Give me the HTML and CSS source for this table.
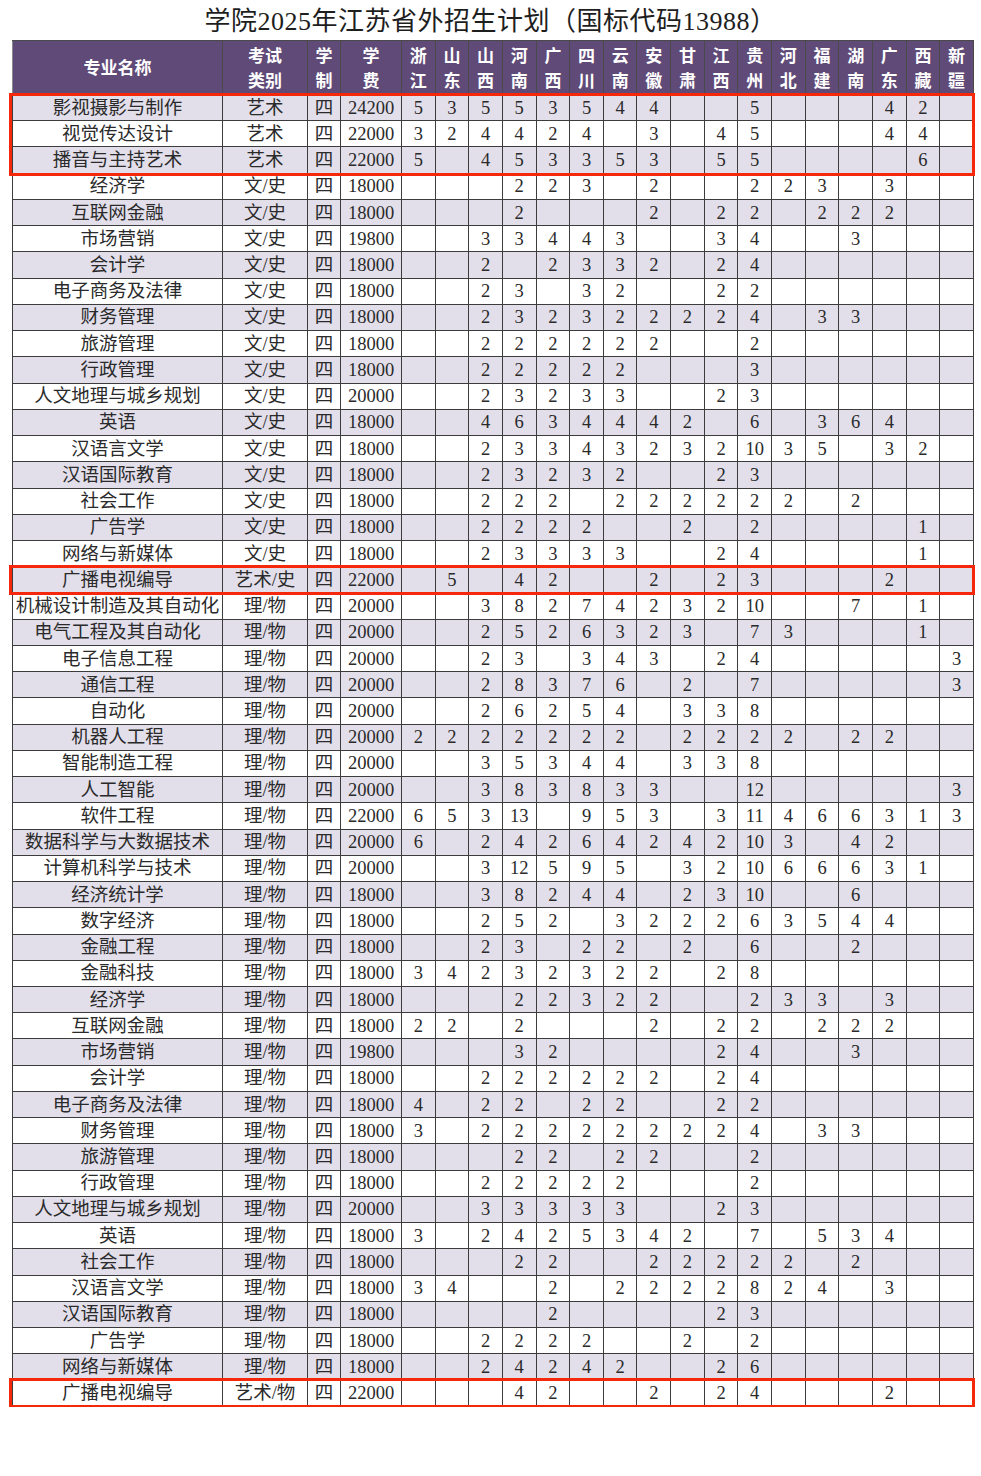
FILE: index.html
```html
<!DOCTYPE html>
<html lang="zh-CN">
<head>
<meta charset="utf-8">
<title>学院2025年江苏省外招生计划</title>
<link rel="stylesheet" href="styles.css">
</head>
<body>
<h1 class="title">学院2025年江苏省外招生计划（国标代码13988）</h1>
<div class="wrap">
<table class="plan">
<colgroup>
<col class="c-name"><col class="c-type"><col class="c-sys"><col class="c-fee">
<col class="c-p"><col class="c-p"><col class="c-p"><col class="c-p"><col class="c-p"><col class="c-p"><col class="c-p"><col class="c-p"><col class="c-p"><col class="c-p"><col class="c-p"><col class="c-p"><col class="c-p"><col class="c-p"><col class="c-p"><col class="c-p"><col class="c-p">
</colgroup>
<thead>
<tr>
<th>专业名称</th><th>考试<br>类别</th><th>学<br>制</th><th>学<br>费</th>
<th>浙<br>江</th><th>山<br>东</th><th>山<br>西</th><th>河<br>南</th><th>广<br>西</th><th>四<br>川</th><th>云<br>南</th><th>安<br>徽</th><th>甘<br>肃</th><th>江<br>西</th><th>贵<br>州</th><th>河<br>北</th><th>福<br>建</th><th>湖<br>南</th><th>广<br>东</th><th>西<br>藏</th><th>新<br>疆</th>
</tr>
</thead>
<tbody>
<tr><td class="mk mk3">影视摄影与制作</td><td>艺术</td><td>四</td><td>24200</td><td>5</td><td>3</td><td>5</td><td>5</td><td>3</td><td>5</td><td>4</td><td>4</td><td></td><td></td><td>5</td><td></td><td></td><td></td><td>4</td><td>2</td><td></td></tr>
<tr><td>视觉传达设计</td><td>艺术</td><td>四</td><td>22000</td><td>3</td><td>2</td><td>4</td><td>4</td><td>2</td><td>4</td><td></td><td>3</td><td></td><td>4</td><td>5</td><td></td><td></td><td></td><td>4</td><td>4</td><td></td></tr>
<tr><td>播音与主持艺术</td><td>艺术</td><td>四</td><td>22000</td><td>5</td><td></td><td>4</td><td>5</td><td>3</td><td>3</td><td>5</td><td>3</td><td></td><td>5</td><td>5</td><td></td><td></td><td></td><td></td><td>6</td><td></td></tr>
<tr><td>经济学</td><td>文/史</td><td>四</td><td>18000</td><td></td><td></td><td></td><td>2</td><td>2</td><td>3</td><td></td><td>2</td><td></td><td></td><td>2</td><td>2</td><td>3</td><td></td><td>3</td><td></td><td></td></tr>
<tr><td>互联网金融</td><td>文/史</td><td>四</td><td>18000</td><td></td><td></td><td></td><td>2</td><td></td><td></td><td></td><td>2</td><td></td><td>2</td><td>2</td><td></td><td>2</td><td>2</td><td>2</td><td></td><td></td></tr>
<tr><td>市场营销</td><td>文/史</td><td>四</td><td>19800</td><td></td><td></td><td>3</td><td>3</td><td>4</td><td>4</td><td>3</td><td></td><td></td><td>3</td><td>4</td><td></td><td></td><td>3</td><td></td><td></td><td></td></tr>
<tr><td>会计学</td><td>文/史</td><td>四</td><td>18000</td><td></td><td></td><td>2</td><td></td><td>2</td><td>3</td><td>3</td><td>2</td><td></td><td>2</td><td>4</td><td></td><td></td><td></td><td></td><td></td><td></td></tr>
<tr><td>电子商务及法律</td><td>文/史</td><td>四</td><td>18000</td><td></td><td></td><td>2</td><td>3</td><td></td><td>3</td><td>2</td><td></td><td></td><td>2</td><td>2</td><td></td><td></td><td></td><td></td><td></td><td></td></tr>
<tr><td>财务管理</td><td>文/史</td><td>四</td><td>18000</td><td></td><td></td><td>2</td><td>3</td><td>2</td><td>3</td><td>2</td><td>2</td><td>2</td><td>2</td><td>4</td><td></td><td>3</td><td>3</td><td></td><td></td><td></td></tr>
<tr><td>旅游管理</td><td>文/史</td><td>四</td><td>18000</td><td></td><td></td><td>2</td><td>2</td><td>2</td><td>2</td><td>2</td><td>2</td><td></td><td></td><td>2</td><td></td><td></td><td></td><td></td><td></td><td></td></tr>
<tr><td>行政管理</td><td>文/史</td><td>四</td><td>18000</td><td></td><td></td><td>2</td><td>2</td><td>2</td><td>2</td><td>2</td><td></td><td></td><td></td><td>3</td><td></td><td></td><td></td><td></td><td></td><td></td></tr>
<tr><td>人文地理与城乡规划</td><td>文/史</td><td>四</td><td>20000</td><td></td><td></td><td>2</td><td>3</td><td>2</td><td>3</td><td>3</td><td></td><td></td><td>2</td><td>3</td><td></td><td></td><td></td><td></td><td></td><td></td></tr>
<tr><td>英语</td><td>文/史</td><td>四</td><td>18000</td><td></td><td></td><td>4</td><td>6</td><td>3</td><td>4</td><td>4</td><td>4</td><td>2</td><td></td><td>6</td><td></td><td>3</td><td>6</td><td>4</td><td></td><td></td></tr>
<tr><td>汉语言文学</td><td>文/史</td><td>四</td><td>18000</td><td></td><td></td><td>2</td><td>3</td><td>3</td><td>4</td><td>3</td><td>2</td><td>3</td><td>2</td><td>10</td><td>3</td><td>5</td><td></td><td>3</td><td>2</td><td></td></tr>
<tr><td>汉语国际教育</td><td>文/史</td><td>四</td><td>18000</td><td></td><td></td><td>2</td><td>3</td><td>2</td><td>3</td><td>2</td><td></td><td></td><td>2</td><td>3</td><td></td><td></td><td></td><td></td><td></td><td></td></tr>
<tr><td>社会工作</td><td>文/史</td><td>四</td><td>18000</td><td></td><td></td><td>2</td><td>2</td><td>2</td><td></td><td>2</td><td>2</td><td>2</td><td>2</td><td>2</td><td>2</td><td></td><td>2</td><td></td><td></td><td></td></tr>
<tr><td>广告学</td><td>文/史</td><td>四</td><td>18000</td><td></td><td></td><td>2</td><td>2</td><td>2</td><td>2</td><td></td><td></td><td>2</td><td></td><td>2</td><td></td><td></td><td></td><td></td><td>1</td><td></td></tr>
<tr><td>网络与新媒体</td><td>文/史</td><td>四</td><td>18000</td><td></td><td></td><td>2</td><td>3</td><td>3</td><td>3</td><td>3</td><td></td><td></td><td>2</td><td>4</td><td></td><td></td><td></td><td></td><td>1</td><td></td></tr>
<tr><td class="mk mk1">广播电视编导</td><td>艺术/史</td><td>四</td><td>22000</td><td></td><td>5</td><td></td><td>4</td><td>2</td><td></td><td></td><td>2</td><td></td><td>2</td><td>3</td><td></td><td></td><td></td><td>2</td><td></td><td></td></tr>
<tr><td>机械设计制造及其自动化</td><td>理/物</td><td>四</td><td>20000</td><td></td><td></td><td>3</td><td>8</td><td>2</td><td>7</td><td>4</td><td>2</td><td>3</td><td>2</td><td>10</td><td></td><td></td><td>7</td><td></td><td>1</td><td></td></tr>
<tr><td>电气工程及其自动化</td><td>理/物</td><td>四</td><td>20000</td><td></td><td></td><td>2</td><td>5</td><td>2</td><td>6</td><td>3</td><td>2</td><td>3</td><td></td><td>7</td><td>3</td><td></td><td></td><td></td><td>1</td><td></td></tr>
<tr><td>电子信息工程</td><td>理/物</td><td>四</td><td>20000</td><td></td><td></td><td>2</td><td>3</td><td></td><td>3</td><td>4</td><td>3</td><td></td><td>2</td><td>4</td><td></td><td></td><td></td><td></td><td></td><td>3</td></tr>
<tr><td>通信工程</td><td>理/物</td><td>四</td><td>20000</td><td></td><td></td><td>2</td><td>8</td><td>3</td><td>7</td><td>6</td><td></td><td>2</td><td></td><td>7</td><td></td><td></td><td></td><td></td><td></td><td>3</td></tr>
<tr><td>自动化</td><td>理/物</td><td>四</td><td>20000</td><td></td><td></td><td>2</td><td>6</td><td>2</td><td>5</td><td>4</td><td></td><td>3</td><td>3</td><td>8</td><td></td><td></td><td></td><td></td><td></td><td></td></tr>
<tr><td>机器人工程</td><td>理/物</td><td>四</td><td>20000</td><td>2</td><td>2</td><td>2</td><td>2</td><td>2</td><td>2</td><td>2</td><td></td><td>2</td><td>2</td><td>2</td><td>2</td><td></td><td>2</td><td>2</td><td></td><td></td></tr>
<tr><td>智能制造工程</td><td>理/物</td><td>四</td><td>20000</td><td></td><td></td><td>3</td><td>5</td><td>3</td><td>4</td><td>4</td><td></td><td>3</td><td>3</td><td>8</td><td></td><td></td><td></td><td></td><td></td><td></td></tr>
<tr><td>人工智能</td><td>理/物</td><td>四</td><td>20000</td><td></td><td></td><td>3</td><td>8</td><td>3</td><td>8</td><td>3</td><td>3</td><td></td><td></td><td>12</td><td></td><td></td><td></td><td></td><td></td><td>3</td></tr>
<tr><td>软件工程</td><td>理/物</td><td>四</td><td>22000</td><td>6</td><td>5</td><td>3</td><td>13</td><td></td><td>9</td><td>5</td><td>3</td><td></td><td>3</td><td>11</td><td>4</td><td>6</td><td>6</td><td>3</td><td>1</td><td>3</td></tr>
<tr><td>数据科学与大数据技术</td><td>理/物</td><td>四</td><td>20000</td><td>6</td><td></td><td>2</td><td>4</td><td>2</td><td>6</td><td>4</td><td>2</td><td>4</td><td>2</td><td>10</td><td>3</td><td></td><td>4</td><td>2</td><td></td><td></td></tr>
<tr><td>计算机科学与技术</td><td>理/物</td><td>四</td><td>20000</td><td></td><td></td><td>3</td><td>12</td><td>5</td><td>9</td><td>5</td><td></td><td>3</td><td>2</td><td>10</td><td>6</td><td>6</td><td>6</td><td>3</td><td>1</td><td></td></tr>
<tr><td>经济统计学</td><td>理/物</td><td>四</td><td>18000</td><td></td><td></td><td>3</td><td>8</td><td>2</td><td>4</td><td>4</td><td></td><td>2</td><td>3</td><td>10</td><td></td><td></td><td>6</td><td></td><td></td><td></td></tr>
<tr><td>数字经济</td><td>理/物</td><td>四</td><td>18000</td><td></td><td></td><td>2</td><td>5</td><td>2</td><td></td><td>3</td><td>2</td><td>2</td><td>2</td><td>6</td><td>3</td><td>5</td><td>4</td><td>4</td><td></td><td></td></tr>
<tr><td>金融工程</td><td>理/物</td><td>四</td><td>18000</td><td></td><td></td><td>2</td><td>3</td><td></td><td>2</td><td>2</td><td></td><td>2</td><td></td><td>6</td><td></td><td></td><td>2</td><td></td><td></td><td></td></tr>
<tr><td>金融科技</td><td>理/物</td><td>四</td><td>18000</td><td>3</td><td>4</td><td>2</td><td>3</td><td>2</td><td>3</td><td>2</td><td>2</td><td></td><td>2</td><td>8</td><td></td><td></td><td></td><td></td><td></td><td></td></tr>
<tr><td>经济学</td><td>理/物</td><td>四</td><td>18000</td><td></td><td></td><td></td><td>2</td><td>2</td><td>3</td><td>2</td><td>2</td><td></td><td></td><td>2</td><td>3</td><td>3</td><td></td><td>3</td><td></td><td></td></tr>
<tr><td>互联网金融</td><td>理/物</td><td>四</td><td>18000</td><td>2</td><td>2</td><td></td><td>2</td><td></td><td></td><td></td><td>2</td><td></td><td>2</td><td>2</td><td></td><td>2</td><td>2</td><td>2</td><td></td><td></td></tr>
<tr><td>市场营销</td><td>理/物</td><td>四</td><td>19800</td><td></td><td></td><td></td><td>3</td><td>2</td><td></td><td></td><td></td><td></td><td>2</td><td>4</td><td></td><td></td><td>3</td><td></td><td></td><td></td></tr>
<tr><td>会计学</td><td>理/物</td><td>四</td><td>18000</td><td></td><td></td><td>2</td><td>2</td><td>2</td><td>2</td><td>2</td><td>2</td><td></td><td>2</td><td>4</td><td></td><td></td><td></td><td></td><td></td><td></td></tr>
<tr><td>电子商务及法律</td><td>理/物</td><td>四</td><td>18000</td><td>4</td><td></td><td>2</td><td>2</td><td></td><td>2</td><td>2</td><td></td><td></td><td>2</td><td>2</td><td></td><td></td><td></td><td></td><td></td><td></td></tr>
<tr><td>财务管理</td><td>理/物</td><td>四</td><td>18000</td><td>3</td><td></td><td>2</td><td>2</td><td>2</td><td>2</td><td>2</td><td>2</td><td>2</td><td>2</td><td>4</td><td></td><td>3</td><td>3</td><td></td><td></td><td></td></tr>
<tr><td>旅游管理</td><td>理/物</td><td>四</td><td>18000</td><td></td><td></td><td></td><td>2</td><td>2</td><td></td><td>2</td><td>2</td><td></td><td></td><td>2</td><td></td><td></td><td></td><td></td><td></td><td></td></tr>
<tr><td>行政管理</td><td>理/物</td><td>四</td><td>18000</td><td></td><td></td><td>2</td><td>2</td><td>2</td><td>2</td><td>2</td><td></td><td></td><td></td><td>2</td><td></td><td></td><td></td><td></td><td></td><td></td></tr>
<tr><td>人文地理与城乡规划</td><td>理/物</td><td>四</td><td>20000</td><td></td><td></td><td>3</td><td>3</td><td>3</td><td>3</td><td>3</td><td></td><td></td><td>2</td><td>3</td><td></td><td></td><td></td><td></td><td></td><td></td></tr>
<tr><td>英语</td><td>理/物</td><td>四</td><td>18000</td><td>3</td><td></td><td>2</td><td>4</td><td>2</td><td>5</td><td>3</td><td>4</td><td>2</td><td></td><td>7</td><td></td><td>5</td><td>3</td><td>4</td><td></td><td></td></tr>
<tr><td>社会工作</td><td>理/物</td><td>四</td><td>18000</td><td></td><td></td><td></td><td>2</td><td>2</td><td></td><td></td><td>2</td><td>2</td><td>2</td><td>2</td><td>2</td><td></td><td>2</td><td></td><td></td><td></td></tr>
<tr><td>汉语言文学</td><td>理/物</td><td>四</td><td>18000</td><td>3</td><td>4</td><td></td><td></td><td>2</td><td></td><td>2</td><td>2</td><td>2</td><td>2</td><td>8</td><td>2</td><td>4</td><td></td><td>3</td><td></td><td></td></tr>
<tr><td>汉语国际教育</td><td>理/物</td><td>四</td><td>18000</td><td></td><td></td><td></td><td></td><td>2</td><td></td><td></td><td></td><td></td><td>2</td><td>3</td><td></td><td></td><td></td><td></td><td></td><td></td></tr>
<tr><td>广告学</td><td>理/物</td><td>四</td><td>18000</td><td></td><td></td><td>2</td><td>2</td><td>2</td><td>2</td><td></td><td></td><td>2</td><td></td><td>2</td><td></td><td></td><td></td><td></td><td></td><td></td></tr>
<tr><td>网络与新媒体</td><td>理/物</td><td>四</td><td>18000</td><td></td><td></td><td>2</td><td>4</td><td>2</td><td>4</td><td>2</td><td></td><td></td><td>2</td><td>6</td><td></td><td></td><td></td><td></td><td></td><td></td></tr>
<tr><td class="mk mk1">广播电视编导</td><td>艺术/物</td><td>四</td><td>22000</td><td></td><td></td><td></td><td>4</td><td>2</td><td></td><td></td><td>2</td><td></td><td>2</td><td>4</td><td></td><td></td><td></td><td>2</td><td></td><td></td></tr>
</tbody>
</table>
</div>
</body>
</html>
```

FILE: styles.css
```css
html, body {
  margin: 0;
  padding: 0;
  background: #ffffff;
}

.title {
  margin: 0;
  height: 40px;
  padding-top: 5px;
  box-sizing: border-box;
  text-align: center;
  font-family: "Liberation Serif", "Noto Sans CJK SC", serif;
  font-weight: 400;
  font-size: 26px;
  line-height: 34px;
  color: #1e1e1e;
  letter-spacing: 0.5px;
}

.wrap {
  padding-left: 12px;
}

.plan {
  width: 961px;
  table-layout: fixed;
  border-collapse: collapse;
  font-family: "Liberation Serif", "Noto Sans CJK SC", serif;
}

.c-name { width: 210px; }
.c-type { width: 85px; }
.c-sys  { width: 33px; }
.c-fee  { width: 61px; }
.c-p    { width: 33.65px; }

.plan th {
  height: 53px;
  padding: 0;
  background: #5f4a78;
  color: #ffffff;
  font-family: "Noto Sans CJK SC", sans-serif;
  font-weight: 700;
  font-size: 17px;
  line-height: 24.8px;
  text-align: center;
  vertical-align: middle;
  border: 1px solid #4a4a4a;
}

.plan thead tr th:first-child {
  border-left-color: #8a8a8a;
}

.plan td {
  height: 26.24px;
  padding: 0;
  box-sizing: border-box;
  font-size: 18.5px;
  line-height: 24px;
  color: #2a2a2a;
  text-align: center;
  vertical-align: middle;
  white-space: nowrap;
  overflow: visible;
  border: 1px solid #3c3c3c;
}

.plan tbody tr:nth-child(odd) td {
  background: #e2dfea;
}

.plan tbody tr:nth-child(even) td {
  background: #ffffff;
}

.plan td.mk {
  position: relative;
}

.plan td.mk::after {
  content: "";
  position: absolute;
  left: -4px;
  top: -2px;
  width: 966px;
  box-sizing: border-box;
  border: 3px solid #f5280c;
  pointer-events: none;
  z-index: 2;
}

.plan td.mk1::after {
  height: 30px;
}

.plan td.mk3::after {
  height: 82.5px;
}
```
